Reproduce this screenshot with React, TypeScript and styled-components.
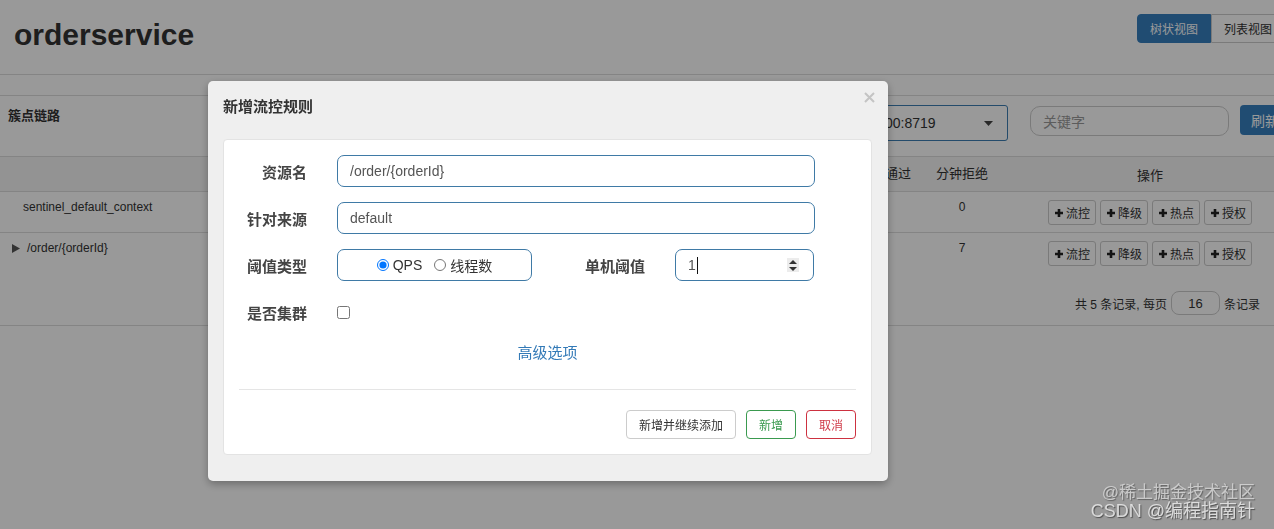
import styled, { createGlobalStyle } from "styled-components";

const GlobalStyle = createGlobalStyle`
  html, body {
    margin: 0;
    padding: 0;
    background: #fff;
    overflow: hidden;
  }
  body {
    width: 1274px;
    height: 529px;
    font-family: "Liberation Sans", "Noto Sans CJK SC", sans-serif;
    color: #333;
  }
  * { box-sizing: border-box; }
`;

const Page = styled.div`
  width: 1300px;
  height: 529px;
  background: #fff;
`;

const Header = styled.header`
  height: 75px;
  border-bottom: 1px solid #ddd;
  display: flex;
  justify-content: space-between;
  align-items: flex-start;
  padding: 0 15px 0 14px;
`;

const Title = styled.h1`
  margin: 17px 0 0;
  font-size: 30px;
  line-height: 36px;
  font-weight: bold;
  color: #333;
`;

const ViewToggle = styled.div`
  margin-top: 14px;
  display: flex;
`;

const ToggleButton = styled.div<{ $active?: boolean }>`
  width: 74px;
  height: 29px;
  display: flex;
  align-items: center;
  justify-content: center;
  font-size: 12px;
  border: 1px solid ${(p) => (p.$active ? "#367fbf" : "#ccc")};
  background: ${(p) => (p.$active ? "#367fbf" : "#fff")};
  color: ${(p) => (p.$active ? "#fff" : "#333")};
  border-radius: ${(p) => (p.$active ? "4px 0 0 4px" : "0 4px 4px 0")};
`;

const Panel = styled.section`
  margin-top: 20px;
  border-top: 1px solid #ddd;
  border-bottom: 1px solid #ddd;
`;

const PanelHeading = styled.div`
  height: 61px;
  border-bottom: 1px solid #ddd;
  display: flex;
  justify-content: space-between;
  align-items: flex-start;
  padding: 9px 10px 0 8px;
`;

const PanelTitle = styled.div`
  margin-top: 1px;
  font-size: 13px;
  line-height: 20px;
  font-weight: bold;
  color: #333;
`;

const Controls = styled.div`
  display: flex;
  align-items: flex-start;
`;

const MachineSelect = styled.div`
  width: 210px;
  height: 36px;
  margin-right: 22px;
  border: 1px solid #3c7eb3;
  border-radius: 3px;
  display: flex;
  align-items: center;
  justify-content: space-between;
  padding: 0 14px 0 12px;
  font-size: 14px;
  color: #333;
`;

const KeywordInput = styled.div`
  width: 199px;
  height: 30px;
  margin-top: 1px;
  margin-right: 11px;
  border: 1px solid #ccc;
  border-radius: 10px;
  display: flex;
  align-items: center;
  padding-left: 12px;
  font-size: 14px;
  color: #999;
`;

const RefreshButton = styled.div`
  width: 50px;
  height: 30px;
  border-radius: 4px;
  background: #367fbf;
  color: #fff;
  font-size: 14px;
  display: flex;
  align-items: center;
  justify-content: center;
`;

const TableGrid = styled.div<{ $head?: boolean; $last?: boolean }>`
  display: grid;
  grid-template-columns: 1fr 48px 80px 268px;
  padding-right: 30px;
  font-size: ${(p) => (p.$head ? "13px" : "12px")};
  align-items: ${(p) => (p.$head ? "center" : "start")};
  height: ${(p) => (p.$head ? "35px" : "41px")};
  padding-top: ${(p) => (p.$head ? "0" : "8px")};
  background: ${(p) => (p.$head ? "#f5f5f5" : "#fff")};
  border-bottom: ${(p) => (p.$last ? "none" : "1px solid #ddd")};
`;

const NameCell = styled.div<{ $tree?: boolean }>`
  display: flex;
  align-items: center;
  gap: 7px;
  line-height: 14px;
  padding-left: ${(p) => (p.$tree ? "12px" : "23px")};
`;

const NumCell = styled.div`
  text-align: center;
  line-height: 14px;
`;

const ActionCell = styled.div`
  display: flex;
  justify-content: center;
  gap: 4px;
  padding-left: 28px;
`;

const RuleButton = styled.div`
  width: 48px;
  height: 25px;
  border: 1px solid #ccc;
  border-radius: 3px;
  display: flex;
  align-items: center;
  justify-content: center;
  gap: 2px;
  font-size: 12px;
  color: #333;
`;

const Pager = styled.div`
  display: flex;
  justify-content: flex-end;
  align-items: center;
  gap: 4px;
  padding: 17px 40px 10px 0;
  font-size: 12px;
  color: #333;
`;

const PageSize = styled.div`
  width: 49px;
  height: 24px;
  border: 1px solid #ccc;
  border-radius: 8px;
  display: flex;
  align-items: center;
  justify-content: center;
  font-size: 13px;
`;

const Overlay = styled.div`
  position: fixed;
  inset: 0;
  background: rgba(0, 0, 0, 0.4);
`;

const Modal = styled.div`
  position: absolute;
  left: 208px;
  top: 81px;
  width: 680px;
  background: #efefef;
  border-radius: 5px;
  box-shadow: 0 3px 9px rgba(0, 0, 0, 0.3);
  padding: 0 16px 26px 15px;
`;

const ModalHeader = styled.div`
  height: 58px;
  display: flex;
  justify-content: space-between;
  align-items: flex-start;
  margin-right: -3px;
`;

const ModalTitle = styled.h4`
  margin: 16px 0 0;
  font-size: 15px;
  line-height: 20px;
  font-weight: bold;
  color: #333;
`;

const CloseButton = styled.div`
  margin-top: 11px;
  width: 11px;
  height: 11px;
  display: flex;
`;

const ModalBody = styled.div`
  background: #fff;
  border: 1px solid #e3e3e3;
  border-radius: 4px;
  padding: 15px;
`;

const FormRow = styled.div<{ $offset?: number }>`
  display: flex;
  align-items: center;
  height: 32px;
  margin-top: ${(p) => p.$offset ?? 0}px;
  margin-bottom: 15px;
`;

const Label = styled.label<{ $gap?: number }>`
  width: 68px;
  margin-left: ${(p) => p.$gap ?? 0}px;
  margin-right: 30px;
  text-align: right;
  font-size: 15px;
  font-weight: bold;
  color: #444;
  white-space: nowrap;
`;

const InlineLabel = styled(Label)`
  width: auto;
`;

const TextField = styled.div<{ $width: number }>`
  width: ${(p) => p.$width}px;
  height: 32px;
  border: 1px solid #3f7aa6;
  border-radius: 7px;
  display: flex;
  align-items: center;
  padding: 0 14px 0 12px;
  font-size: 14px;
  color: #555;
`;

const RadioBox = styled(TextField)`
  justify-content: center;
  padding: 0;
  color: #333;
`;

const RadioOption = styled.label`
  display: flex;
  align-items: center;
  margin-right: 12px;
  &:last-child { margin-right: 0; }
  input {
    margin: 0 4px 0 0;
    width: 12px;
    height: 12px;
  }
`;

const Caret = styled.span`
  display: inline-block;
  width: 1px;
  height: 17px;
  background: #111;
  margin-left: 1px;
`;

const Spinner = styled.div`
  margin-left: auto;
  width: 12px;
  height: 14px;
  background: #ececec;
  display: flex;
  align-items: center;
  justify-content: center;
`;

const Checkbox = styled.input`
  margin: 0;
  width: 13px;
  height: 13px;
`;

const AdvancedLink = styled.div`
  margin-top: 11px;
  text-align: center;
  font-size: 15px;
  line-height: 20px;
  color: #337ab7;
`;

const Divider = styled.hr`
  margin: 26px 0 20px;
  border: 0;
  border-top: 1px solid #e5e5e5;
`;

const Footer = styled.div`
  display: flex;
  justify-content: flex-end;
  gap: 10px;
`;

const FooterButton = styled.div<{ $tone?: "green" | "red" }>`
  height: 29px;
  padding: 0 12px;
  display: flex;
  align-items: center;
  border-radius: 4px;
  background: #fff;
  font-size: 12px;
  border: 1px solid
    ${(p) => (p.$tone === "green" ? "#3a9a4f" : p.$tone === "red" ? "#cd3140" : "#ccc")};
  color: ${(p) => (p.$tone === "green" ? "#3a9a4f" : p.$tone === "red" ? "#d03b49" : "#333")};
`;

const Watermark = styled.div`
  position: fixed;
  right: 19px;
  bottom: 8px;
  display: flex;
  flex-direction: column;
  align-items: flex-end;
  line-height: 19px;
  color: rgba(235, 235, 235, 0.85);
  text-shadow: 1px 1px 1px rgba(60, 60, 60, 0.8);
`;

const WatermarkLine = styled.div<{ $size: number; $faded?: boolean }>`
  font-size: ${(p) => p.$size}px;
  opacity: ${(p) => (p.$faded ? 0.75 : 1)};
`;

const PlusIcon = () => (
  <svg width="10" height="10" viewBox="0 0 10 10">
    <path d="M5 1v8M1 5h8" stroke="#222" strokeWidth="2.6" />
  </svg>
);

const rows = [
  { name: "sentinel_default_context", tree: false, block: 0 },
  { name: "/order/{orderId}", tree: true, block: 7 },
];

const ruleTypes = ["流控", "降级", "热点", "授权"];

function App() {
  return (
    <>
      <GlobalStyle />
      <Page>
        <Header>
          <Title>orderservice</Title>
          <ViewToggle>
            <ToggleButton $active>树状视图</ToggleButton>
            <ToggleButton>列表视图</ToggleButton>
          </ViewToggle>
        </Header>
        <Panel>
          <PanelHeading>
            <PanelTitle>簇点链路</PanelTitle>
            <Controls>
              <MachineSelect>
                <span>192.168.1.100:8719</span>
                <svg width="9" height="5" viewBox="0 0 9 5">
                  <path d="M0 0h9L4.5 5z" fill="#444" />
                </svg>
              </MachineSelect>
              <KeywordInput>关键字</KeywordInput>
              <RefreshButton>刷新</RefreshButton>
            </Controls>
          </PanelHeading>
          <TableGrid $head>
            <div />
            <NumCell>通过</NumCell>
            <NumCell>分钟拒绝</NumCell>
            <ActionCell>操作</ActionCell>
          </TableGrid>
          {rows.map((r, i) => (
            <TableGrid key={r.name} $last={i === rows.length - 1}>
              <NameCell $tree={r.tree}>
                {r.tree && (
                  <svg width="8" height="9" viewBox="0 0 8 9">
                    <path d="M0 0l8 4.5L0 9z" fill="#555" />
                  </svg>
                )}
                {r.name}
              </NameCell>
              <NumCell />
              <NumCell>{r.block}</NumCell>
              <ActionCell>
                {ruleTypes.map((t) => (
                  <RuleButton key={t}>
                    <PlusIcon />
                    {t}
                  </RuleButton>
                ))}
              </ActionCell>
            </TableGrid>
          ))}
          <Pager>
            <span>共 5 条记录, 每页</span>
            <PageSize>16</PageSize>
            <span>条记录</span>
          </Pager>
        </Panel>
      </Page>

      <Overlay>
        <Modal>
          <ModalHeader>
            <ModalTitle>新增流控规则</ModalTitle>
            <CloseButton>
              <svg width="11" height="11" viewBox="0 0 11 11">
                <path d="M1 1l9 9M10 1l-9 9" stroke="#c4c4c4" strokeWidth="2" />
              </svg>
            </CloseButton>
          </ModalHeader>
          <ModalBody>
            <FormRow>
              <Label>资源名</Label>
              <TextField $width={478}>/order/{"{orderId}"}</TextField>
            </FormRow>
            <FormRow>
              <Label>针对来源</Label>
              <TextField $width={478}>default</TextField>
            </FormRow>
            <FormRow>
              <Label>阈值类型</Label>
              <RadioBox $width={195}>
                <RadioOption>
                  <input type="radio" name="grade" defaultChecked />
                  QPS
                </RadioOption>
                <RadioOption>
                  <input type="radio" name="grade" />
                  线程数
                </RadioOption>
              </RadioBox>
              <InlineLabel $gap={53}>单机阈值</InlineLabel>
              <TextField $width={139}>
                1<Caret />
                <Spinner>
                  <svg width="8" height="11" viewBox="0 0 8 11">
                    <path d="M4 0l4 4H0zM4 11L0 7h8z" fill="#333" />
                  </svg>
                </Spinner>
              </TextField>
            </FormRow>
            <FormRow $offset={2}>
              <Label>是否集群</Label>
              <Checkbox type="checkbox" />
            </FormRow>
            <AdvancedLink>高级选项</AdvancedLink>
            <Divider />
            <Footer>
              <FooterButton>新增并继续添加</FooterButton>
              <FooterButton $tone="green">新增</FooterButton>
              <FooterButton $tone="red">取消</FooterButton>
            </Footer>
          </ModalBody>
        </Modal>
      </Overlay>

      <Watermark>
        <WatermarkLine $size={17} $faded>@稀土掘金技术社区</WatermarkLine>
        <WatermarkLine $size={18}>CSDN @编程指南针</WatermarkLine>
      </Watermark>
    </>
  );
}

export default App;
